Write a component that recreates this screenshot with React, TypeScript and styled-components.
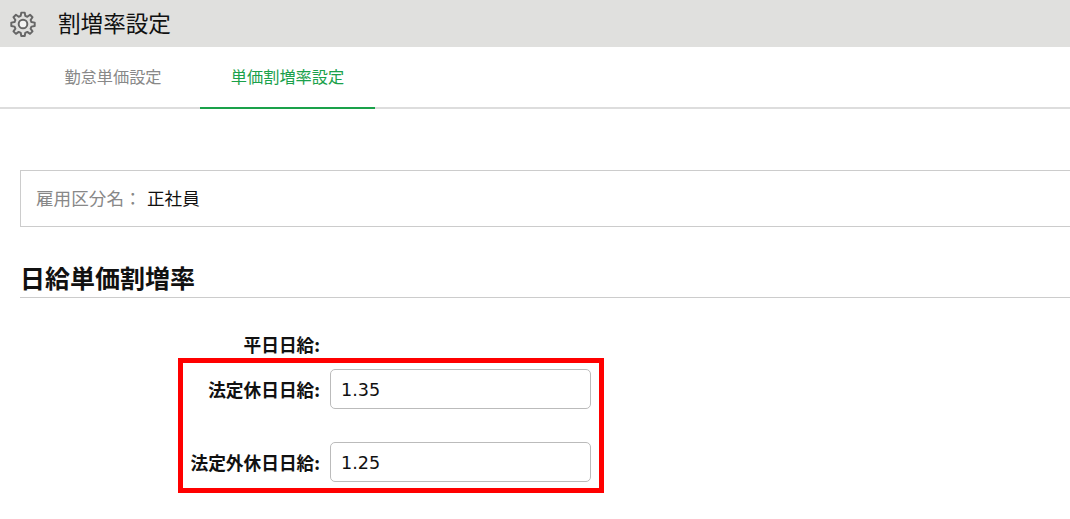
import React from "react";
import styled, { createGlobalStyle } from "styled-components";

const Global = createGlobalStyle`
  html, body { margin: 0; padding: 0; background: #fff; overflow: hidden; }
  body { font-family: "Noto Sans CJK JP", "DejaVu Sans", sans-serif; color: #111; }
`;

const Page = styled.div`
  width: 1070px;
  height: 519px;
  overflow: hidden;
  position: relative;
`;

const Header = styled.header`
  height: 47px;
  background: #e0e0de;
  display: flex;
  align-items: center;
  padding-left: 10px;
  box-sizing: border-box;
`;

const GearSvg = styled.svg`
  width: 26px;
  height: 26px;
  flex: none;
  color: #666;
`;

const Title = styled.h1`
  margin: 0 0 0 22px;
  font-size: 22.6px;
  font-weight: 400;
  line-height: 1;
  color: #111;
`;

const Tabs = styled.nav`
  height: 62px;
  box-sizing: border-box;
  display: flex;
  border-bottom: 2px solid #ddd;
`;

const Tab = styled.div<{ $active?: boolean; $w: number; $pl?: number }>`
  width: ${(p) => p.$w}px;
  box-sizing: border-box;
  height: 62px;
  display: flex;
  align-items: center;
  justify-content: center;
  padding-left: ${(p) => p.$pl ?? 0}px;
  padding-bottom: 3px;
  font-size: 16.2px;
  color: ${(p) => (p.$active ? "#1aa14a" : "#888")};
  border-bottom: 2px solid ${(p) => (p.$active ? "#1aa14a" : "transparent")};
`;

const Content = styled.main`
  padding: 61px 0 0 20px;
`;

const InfoBox = styled.section`
  height: 57px;
  box-sizing: border-box;
  border: 1px solid #ccc;
  border-right: none;
  display: flex;
  align-items: center;
  padding: 0 0 2px 15px;
  font-size: 17.6px;
`;

const InfoLabel = styled.span`
  color: #888;
  width: 111px;
`;

const InfoValue = styled.span`
  color: #111;
`;

const SectionTitle = styled.h2`
  margin: 35px 0 0;
  height: 35px;
  font-size: 25px;
  line-height: 30px;
  font-weight: 700;
  color: #111;
  border-bottom: 1px solid #ccc;
`;

const Form = styled.div`
  margin-top: 33px;
  display: grid;
  grid-template-columns: 300px 261px;
  column-gap: 10px;
  align-items: center;
`;

const Label = styled.label`
  font-size: 17.7px;
  font-weight: 700;
  line-height: 26px;
  text-align: right;
  white-space: nowrap;
  color: #111;
`;

const EmptyValue = styled.div`
  height: 26px;
`;

const Field = styled.input`
  width: 261px;
  height: 40px;
  box-sizing: border-box;
  border: 1px solid #bbb;
  border-radius: 5px;
  padding: 2px 10px 0;
  font-family: "DejaVu Sans", sans-serif;
  font-size: 17.6px;
  color: #111;
  background: #fff;
  outline: none;
`;

const RowGap = styled.div<{ $h: number }>`
  grid-column: 1 / -1;
  height: ${(p) => p.$h}px;
`;

const Highlight = styled.div`
  position: absolute;
  left: 178px;
  top: 358px;
  width: 426px;
  height: 135px;
  box-sizing: border-box;
  border: 5px solid #f00;
  pointer-events: none;
`;

const GEAR =
  "M10.4 1.5h3.2l.5 3 1.9.8 2.5-1.8 2.3 2.3-1.8 2.5.8 1.9 3 .5v3.2l-3 .5-.8 1.9 1.8 2.5-2.3 2.3-2.5-1.8-1.9.8-.5 3h-3.2l-.5-3-1.9-.8-2.5 1.8-2.3-2.3 1.8-2.5-.8-1.9-3-.5v-3.2l3-.5.8-1.9-1.8-2.5 2.3-2.3 2.5 1.8 1.9-.8z";

const Gear = () => (
  <GearSvg viewBox="0 0 24 24" aria-hidden="true">
    <path d={GEAR} fill="none" stroke="currentColor" strokeWidth="1.8" strokeLinejoin="round" />
    <circle cx="12" cy="12" r="4" fill="#f4f4f3" stroke="currentColor" strokeWidth="1.8" />
  </GearSvg>
);

export default function App() {
  return (
    <Page>
      <Global />
      <Header>
        <Gear />
        <Title>割増率設定</Title>
      </Header>
      <Tabs>
        <Tab $w={200} $pl={26}>勤怠単価設定</Tab>
        <Tab $w={175} $active>単価割増率設定</Tab>
      </Tabs>
      <Content>
        <InfoBox>
          <InfoLabel>雇用区分名：</InfoLabel>
          <InfoValue>正社員</InfoValue>
        </InfoBox>
        <SectionTitle>日給単価割増率</SectionTitle>
        <Form>
          <Label>平日日給:</Label>
          <EmptyValue />
          <RowGap $h={12} />
          <Label>法定休日日給:</Label>
          <Field readOnly value="1.35" />
          <RowGap $h={33} />
          <Label>法定外休日日給:</Label>
          <Field readOnly value="1.25" />
        </Form>
      </Content>
      <Highlight />
    </Page>
  );
}
